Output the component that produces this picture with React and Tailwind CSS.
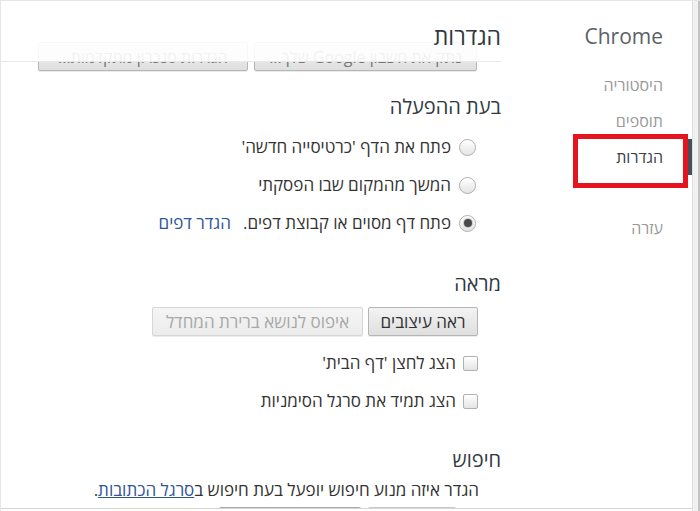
import React from "react";

const sideItems = [
  { label: "היסטוריה" },
  { label: "תוספים" },
  { label: "הגדרות", active: true },
];

function Radio({ checked }) {
  return (
    <span className="flex h-[17px] w-[17px] shrink-0 items-center justify-center rounded-full border border-[#b0b0b0] bg-gradient-to-b from-white to-[#e4e4e4]">
      {checked && <span className="h-[8px] w-[8px] rounded-full bg-[#4a4a4a] ring-1 ring-[#8a8a8a]/40" />}
    </span>
  );
}

function Checkbox() {
  return <span className="h-[15px] w-[15px] shrink-0 rounded-[2px] border border-[#b0b0b0] bg-gradient-to-b from-white to-[#e4e4e4]" />;
}

function Button({ children, disabled, className = "" }) {
  return (
    <button
      className={`h-[29px] whitespace-nowrap rounded-[2px] border px-[6px] leading-none shadow-[0_1px_0_rgba(0,0,0,0.08)] ${
        disabled
          ? "border-[#d6d6d6] bg-gradient-to-b from-[#f5f5f5] to-[#ececec] text-[#a8a8a8]"
          : "border-[#b5b5b5] bg-gradient-to-b from-[#f3f3f3] to-[#dfdfdf] text-[#333]"
      } ${className}`}
    >
      {children}
    </button>
  );
}

function Section({ title, children, className = "" }) {
  return (
    <div className={className}>
      <h3 className="text-[20px] leading-[24px] text-[#303942]">{title}</h3>
      {children}
    </div>
  );
}

export default function App() {
  return (
    <div
      dir="rtl"
      className="relative flex h-[511px] w-[700px] overflow-hidden border-t border-l border-[#e6e6e6] bg-white font-['Open_Sans',sans-serif] text-[#333]"
    >
      {/* scrollbar strip */}
      <div className="h-full w-[8px] shrink-0 border-l border-r-2 border-[#dedede] border-r-[#c4c4c4] bg-[#f1f1f1]" />

      {/* sidebar */}
      <div className="w-[171px] shrink-0">
        <div dir="ltr" className="pr-[29px] pt-[21px] text-right text-[21px] leading-[28px] text-[#5c6166]">
          Chrome
        </div>
        <ul className="mt-[17px]">
          {sideItems.map((item) => (
            <li
              key={item.label}
              className={`flex h-[36px] items-center border-r-[5px] pr-[24px] text-[16px] ${
                item.active ? "border-[#464e5a] text-[#3a3f46]" : "border-transparent text-[#999]"
              }`}
            >
              {item.label}
            </li>
          ))}
          <li className="mt-[35px] flex h-[36px] items-center border-r-[5px] border-transparent pr-[24px] text-[16px] text-[#999]">
            עזרה
          </li>
        </ul>
      </div>

      {/* main */}
      <div className="relative flex-1 pr-[20px] pt-[41px]">
        <div className="flex gap-[6px] pr-[24px]">
          <Button className="h-[27px] w-[223px] text-[16px] text-[#777]">נתק את חשבון Google שלך...</Button>
          <Button className="h-[27px] w-[210px] text-[16px] text-[#777]">הגדרות סנכרון מתקדמות...</Button>
        </div>

        <Section title="בעת ההפעלה" className="mt-[24px]">
          <div className="mt-[9px] pr-[25px] text-[17px]">
            <label className="flex h-[38px] items-center gap-[8px]">
              <Radio />
              <span>פתח את הדף 'כרטיסייה חדשה'</span>
            </label>
            <label className="flex h-[38px] items-center gap-[8px]">
              <Radio />
              <span>המשך מהמקום שבו הפסקתי</span>
            </label>
            <label className="flex h-[38px] items-center gap-[8px]">
              <Radio checked />
              <span>פתח דף מסוים או קבוצת דפים.</span>
              <a className="mr-[4px] text-[#2f5597]">הגדר דפים</a>
            </label>
          </div>
        </Section>

        <Section title="מראה" className="mt-[30px]">
          <div className="mt-[11px] flex gap-[5px] pr-[23px]">
            <Button className="w-[110px] text-[17px]">ראה עיצובים</Button>
            <Button disabled className="w-[211px] text-[17px]">איפוס לנושא ברירת המחדל</Button>
          </div>
          <div className="mt-[8px] pr-[23px] text-[17px]">
            <label className="flex h-[38px] items-center gap-[7px]">
              <Checkbox />
              <span>הצג לחצן 'דף הבית'</span>
            </label>
            <label className="flex h-[38px] items-center gap-[7px]">
              <Checkbox />
              <span>הצג תמיד את סרגל הסימניות</span>
            </label>
          </div>
        </Section>

        <Section title="חיפוש" className="mt-[28px]">
          <p className="mt-[7px] pr-[22px] text-[17px] leading-[22px]">
            הגדר איזה מנוע חיפוש יופעל בעת חיפוש ב
            <a className="text-[#2f5597] underline">סרגל הכתובות</a>.
          </p>
          <div className="mt-[6px] flex gap-[7px] pr-[45px]">
            <span className="h-[10px] w-[88px] rounded-[2px] border-t border-[#c8c8c8]" />
            <span className="h-[10px] w-[142px] rounded-[2px] border-t border-[#aaa]" />
          </div>
        </Section>

        {/* fixed page header, lies over the scrolled content */}
        <div className="absolute left-0 right-[20px] top-0 h-[61px] border-b border-[#e8e8e8] bg-white/90">
          <h1 className="pt-[20px] text-[23px] leading-[30px] text-[#303942]">הגדרות</h1>
        </div>
      </div>

      {/* bottom window edge */}
      <div className="absolute bottom-[2px] left-0 right-[8px] h-px bg-[#d4d4d4]" />

      {/* annotation box */}
      <div className="absolute left-[572px] top-[133px] h-[54px] w-[115px] border-[5px] border-[#e5141f]" />
    </div>
  );
}
